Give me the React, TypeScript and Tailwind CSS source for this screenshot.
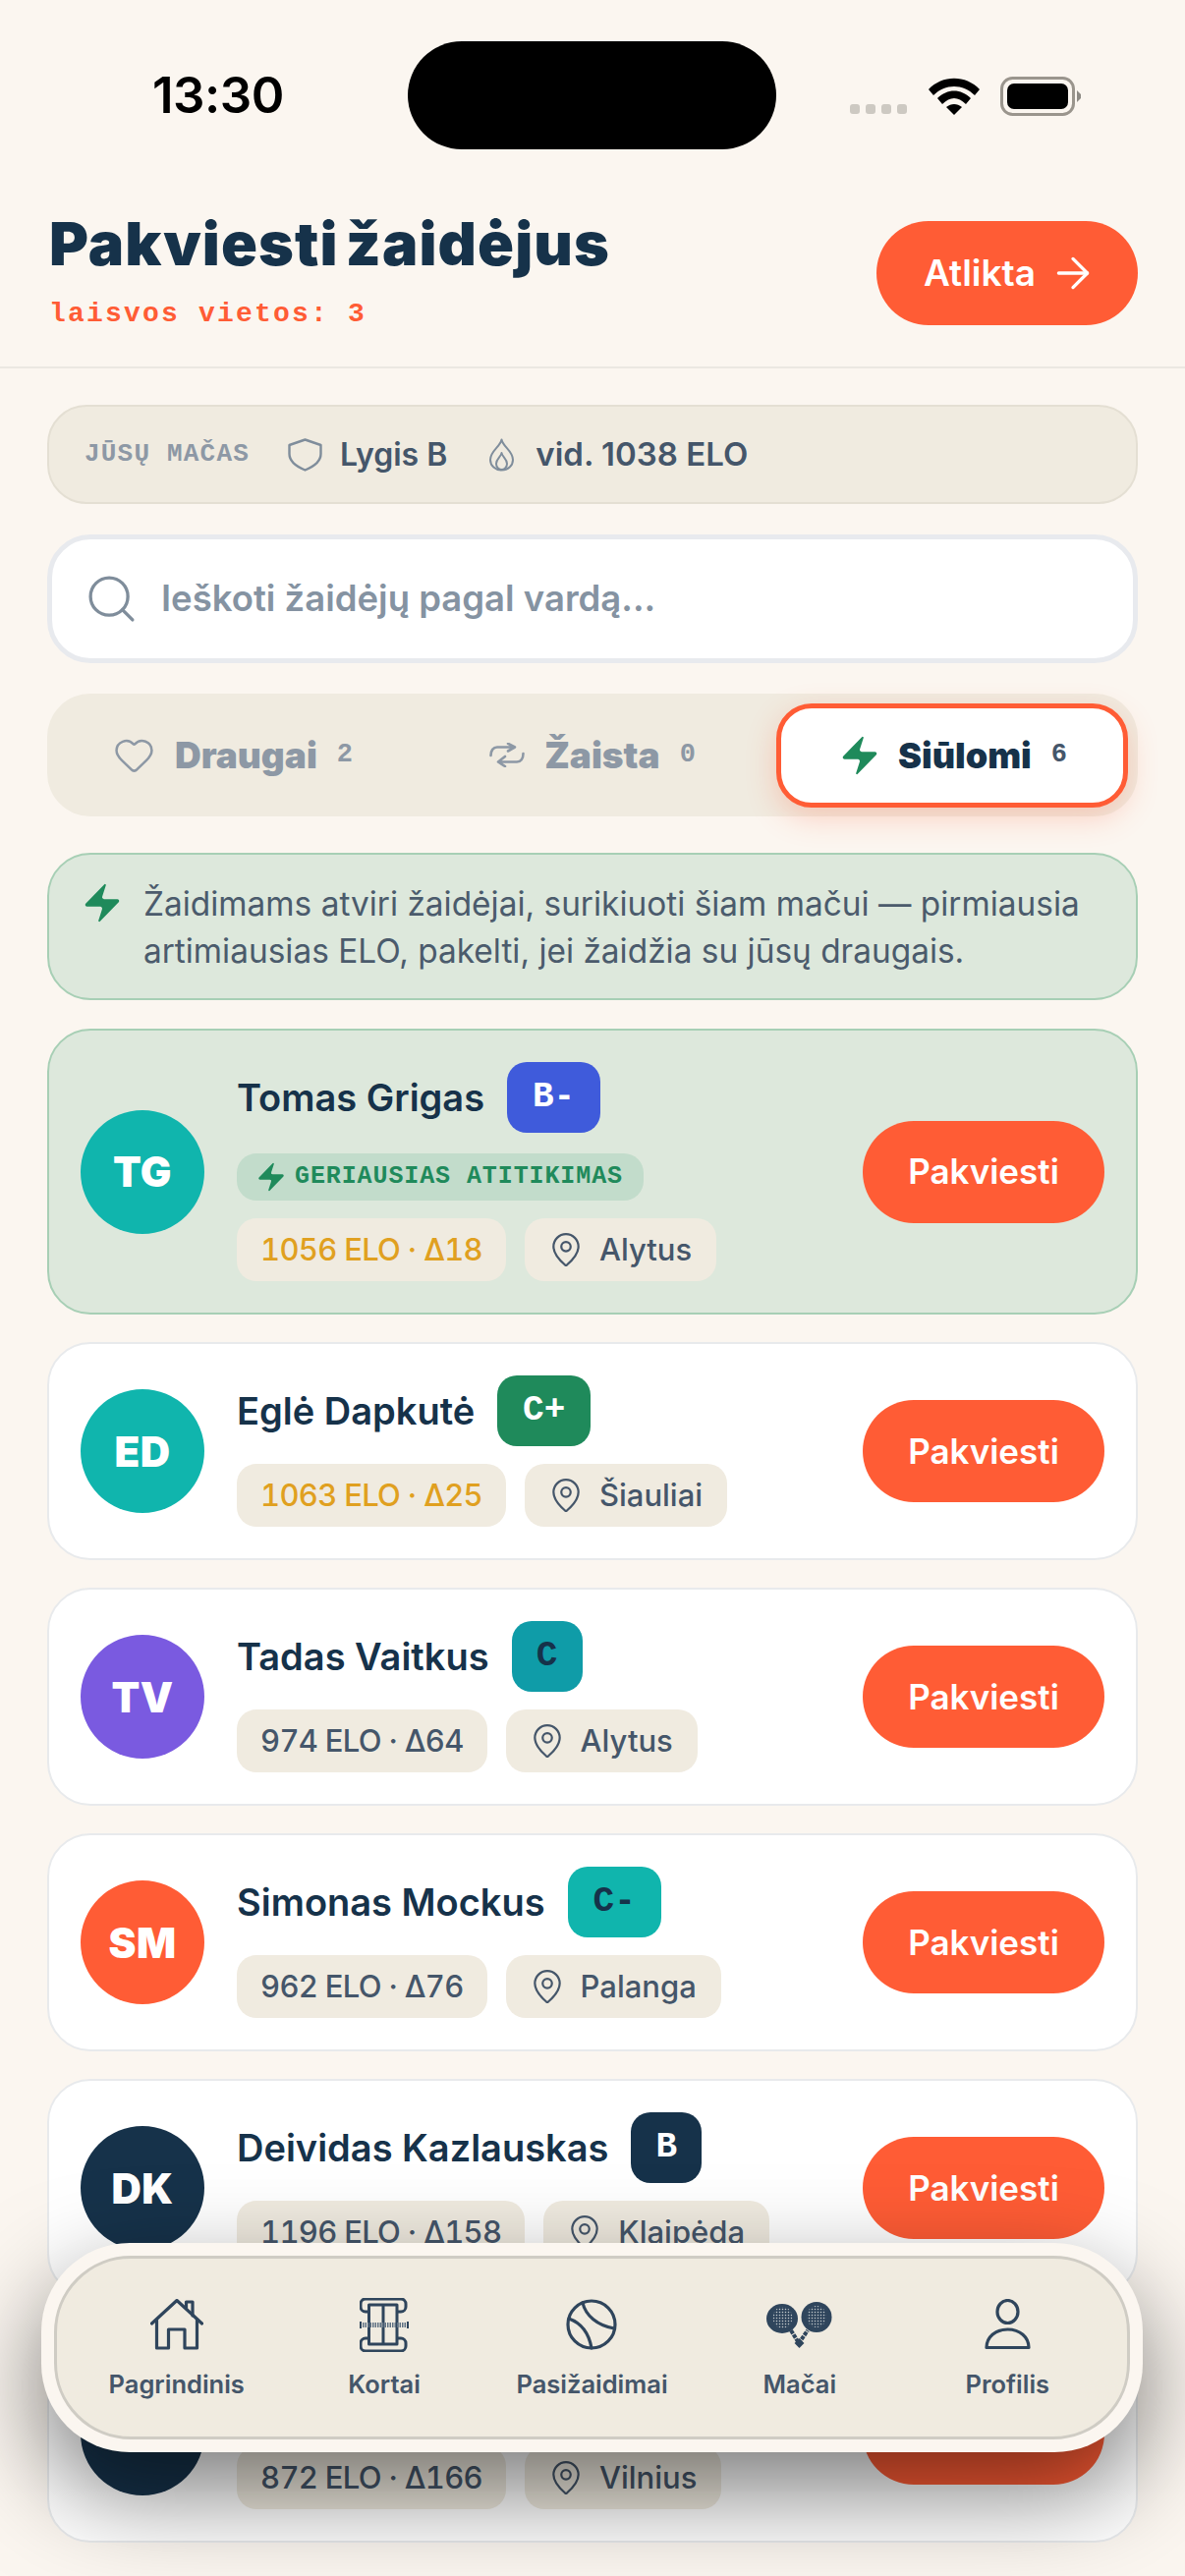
import { ArrowRight, Heart, MapPin, Search, Zap } from "lucide-react";

type Player = {
  initials: string;
  name: string;
  grade: string;
  gradeClass: string;
  avatarClass: string;
  elo: string;
  city: string;
  close?: boolean;
  best?: boolean;
};

// the last card sits behind the nav, its name row can't be read in the design
const players: Player[] = [
  { initials: "TG", name: "Tomas Grigas", grade: "B-", gradeClass: "bg-[#3f5bdb] w-[95px] text-white", avatarClass: "bg-[#10b5ad]", elo: "1056 ELO · Δ18", city: "Alytus", close: true, best: true },
  { initials: "ED", name: "Eglė Dapkutė", grade: "C+", gradeClass: "bg-[#1f8a5b] w-[95px] text-white", avatarClass: "bg-[#10b5ad]", elo: "1063 ELO · Δ25", city: "Šiauliai", close: true },
  { initials: "TV", name: "Tadas Vaitkus", grade: "C", gradeClass: "bg-[#0f9ca8] w-[72px] text-[#16324a]", avatarClass: "bg-[#7a5ae0]", elo: "974 ELO · Δ64", city: "Alytus" },
  { initials: "SM", name: "Simonas Mockus", grade: "C-", gradeClass: "bg-[#10b5ad] w-[95px] text-[#16324a]", avatarClass: "bg-[#ff5c35]", elo: "962 ELO · Δ76", city: "Palanga" },
  { initials: "DK", name: "Deividas Kazlauskas", grade: "B", gradeClass: "bg-[#16324a] w-[72px] text-white", avatarClass: "bg-[#16324a]", elo: "1196 ELO · Δ158", city: "Klaipėda" },
  { initials: "", name: "", grade: "", gradeClass: "w-[72px]", avatarClass: "bg-[#16324a]", elo: "872 ELO · Δ166", city: "Vilnius" },
];

function StatusBar() {
  return (
    <div className="flex h-[152px] items-start pt-[42px]">
      <div className="w-[415px] pl-[155px] pt-[25px] text-[51px] leading-[60px] font-semibold tracking-[-0.5px] text-black">13:30</div>
      <div className="h-[110px] w-[375px] rounded-[55px] bg-black" />
      <div className="flex flex-1 items-center pl-[75px] pt-[36px]">
        <div className="mt-[26px] flex gap-[6px]">
          <span className="size-[10px] rounded-[3px] bg-[#cdc9c2]" />
          <span className="size-[10px] rounded-[3px] bg-[#cdc9c2]" />
          <span className="size-[10px] rounded-[3px] bg-[#cdc9c2]" />
          <span className="size-[10px] rounded-[3px] bg-[#cdc9c2]" />
        </div>
        <svg width="52" height="38" viewBox="0 0 52 38" className="ml-[22px]">
          <path d="M0 12 C14 -3 38 -3 52 12 L47 18 C35 6 17 6 5 18 Z" fill="#000" />
          <path d="M9 21 C19 11 33 11 43 21 L38 27 C30 19 22 19 14 27 Z" fill="#000" />
          <path d="M18 30 C23 26 29 26 34 30 L26 38 Z" fill="#000" />
        </svg>
        <svg width="84" height="40" viewBox="0 0 84 40" className="ml-[21px]">
          <rect x="1.5" y="1.5" width="73" height="37" rx="11" fill="none" stroke="#9a958d" strokeWidth="3" />
          <rect x="7" y="7" width="62" height="26" rx="7" fill="#000" />
          <path d="M78 14 L82 18 V22 L78 26 Z" fill="#8d8a84" />
        </svg>
      </div>
    </div>
  );
}

function Header() {
  return (
    <div className="flex h-[223px] items-start justify-between border-b-2 border-[#ebe8e2] pl-[50px] pr-[48px] pt-[73px]">
      <div>
        <h1 className="-mt-[12px] text-[61px] leading-[70px] font-black tracking-[1.1px] text-[#16324a] [word-spacing:-6px]">Pakviesti žaidėjus</h1>
        <div className="mt-[20px] font-['Liberation_Mono',monospace] text-[28px] leading-[34px] font-bold tracking-[2.2px] text-[#ff5c35]">laisvos vietos: 3</div>
      </div>
      <button className="flex h-[106px] w-[266px] items-center gap-[13px] rounded-full bg-[#ff5c35] pl-[48px] text-[37px] font-semibold text-white">
        Atlikta
        <ArrowRight size={50} strokeWidth={1.6} />
      </button>
    </div>
  );
}

function MatchBar() {
  return (
    <div className="mx-[48px] mt-[37px] flex h-[101px] items-center rounded-[40px] border-2 border-[#e4dfd3] bg-[#f0ebe0] pl-[36px]">
      <span className="font-['Liberation_Mono',monospace] text-[26px] font-bold tracking-[1.2px] text-[#8d98a5]">JŪSŲ MAČAS</span>
      <svg width="35" height="34" viewBox="0 0 35 34" fill="none" stroke="#7f8d9b" strokeWidth="2.4" strokeLinejoin="round" className="ml-[39px]">
        <path d="M17.5 1.5 L33.5 7 V16 C33.5 24 26 29 17.5 32.5 C9 29 1.5 24 1.5 16 V7 Z" />
      </svg>
      <span className="ml-[18px] text-[32px] font-semibold text-[#45566a]">Lygis B</span>
      <svg width="27" height="34" viewBox="0 0 27 34" fill="none" stroke="#7f8d9b" strokeWidth="2" strokeLinejoin="round" className="ml-[42px]">
        <path d="M13.5 1.5 C15 9 25 13 25 22 C25 28 20 32.5 13.5 32.5 C7 32.5 2 28 2 22 C2 13 12 9 13.5 1.5 Z" />
        <path d="M13.5 15 C14 19 19 21 19 26 C19 30 16 32 13.5 32 C11 32 8 30 8 26 C8 21 13 19 13.5 15 Z" />
      </svg>
      <span className="ml-[21px] text-[33px] font-semibold text-[#45566a]">vid. 1038 ELO</span>
    </div>
  );
}

function SearchBox() {
  return (
    <div className="mx-[48px] mt-[31px] flex h-[131px] items-center rounded-[44px] border-[5px] border-[#e8eaee] bg-white pl-[32px]">
      <Search size={57} strokeWidth={1.4} className="text-[#7f8d9b]" />
      <span className="ml-[22px] text-[36.5px] font-semibold text-[#8593a2]">Ieškoti žaidėjų pagal vardą...</span>
    </div>
  );
}

function Tabs() {
  return (
    <div className="mx-[48px] mt-[31px] grid h-[125px] grid-cols-3 items-center gap-[8px] rounded-[44px] bg-[#f0ebe0] px-[10px] text-[37px] font-black text-[#8d98a5]">
      <div className="flex items-center justify-center gap-[20px]">
        <Heart size={43} strokeWidth={1.4} />
        <span>Draugai</span>
        <span className="font-['Liberation_Mono',monospace] text-[27px] font-bold">2</span>
      </div>
      <div className="flex items-center justify-center gap-[20px]">
        <svg width="36" height="25" viewBox="0 0 36 25" fill="none" stroke="#8d98a5" strokeWidth="2.6" strokeLinecap="round" strokeLinejoin="round">
          <path d="M1.5 13 C1.5 8 4 4.5 8 4.5 H26 M19 0.8 L26 4.5 L19 8.5" />
          <path d="M34.5 11 C34.5 16 32 19.5 28 19.5 H9 M16 14 L9 19.5 L16 24" />
        </svg>
        <span>Žaista</span>
        <span className="font-['Liberation_Mono',monospace] text-[27px] font-bold">0</span>
      </div>
      <div className="flex h-[106px] items-center justify-center gap-[16px] rounded-[36px] border-[5px] border-[#ff5c35] bg-white text-[36px] text-[#16324a] shadow-[0_10px_30px_rgba(255,92,53,0.25)]">
        <Zap size={46} fill="#1f8a5b" strokeWidth={0} />
        <span>Siūlomi</span>
        <span className="ml-[4px] font-['Liberation_Mono',monospace] text-[27px] font-bold text-[#45566a]">6</span>
      </div>
    </div>
  );
}

function InfoBox() {
  return (
    <div className="mx-[48px] mt-[37px] flex h-[150px] rounded-[44px] border-2 border-[#a7cfb5] bg-[#dde8dc] pl-[31px] pt-[26px]">
      <Zap size={46} fill="#1f8a5b" strokeWidth={0} className="shrink-0" />
      <p className="ml-[19px] text-[33.4px] leading-[48px] text-[#4b5b6c]">
        Žaidimams atviri žaidėjai, surikiuoti šiam mačui — pirmiausia
        <br />
        artimiausias ELO, pakelti, jei žaidžia su jūsų draugais.
      </p>
    </div>
  );
}

function PlayerCard({ player }: { player: Player }) {
  return (
    <div className={`flex items-center rounded-[44px] border-2 px-[32px] py-[32px] ${player.best ? "border-[#a7cfb5] bg-[#dde8dc]" : "border-[#e8eaec] bg-white"}`}>
      <div className={`flex size-[126px] shrink-0 items-center justify-center rounded-full text-[42px] font-black tracking-[0.5px] text-white ${player.avatarClass}`}>{player.initials}</div>
      <div className="ml-[33px] flex flex-1 flex-col items-start gap-[18px]">
        <div className="flex items-center gap-[23px]">
          <span className="text-[38px] font-semibold text-[#16324a]">{player.name}</span>
          <span className={`flex h-[72px] items-center justify-center rounded-[20px] font-['Liberation_Mono',monospace] text-[36px] font-bold ${player.gradeClass}`}>{player.grade}</span>
        </div>
        {player.best && (
          <div className="mt-[3px] flex h-[48px] w-[414px] items-center gap-[7px] rounded-[20px] bg-[#c2dccb] pl-[18px] font-['Liberation_Mono',monospace] text-[25px] font-bold tracking-[0.9px] text-[#1f8a5b]">
            <Zap size={34} fill="#1f8a5b" strokeWidth={0} />
            GERIAUSIAS ATITIKIMAS
          </div>
        )}
        <div className="flex gap-[19px]">
          <span className={`flex h-[64px] items-center rounded-[20px] bg-[#f0ebe0] px-[24px] text-[31px] font-medium tracking-[-0.7px] tabular-nums ${player.close ? "text-[#e0a020]" : "text-[#45566a]"}`}>{player.elo}</span>
          <span className="flex h-[64px] items-center gap-[15px] rounded-[20px] bg-[#f0ebe0] pl-[23px] pr-[25px] text-[31px] font-medium text-[#45566a]">
            <MapPin size={38} strokeWidth={1.4} />
            {player.city}
          </span>
        </div>
      </div>
      <button className="flex h-[104px] w-[246px] shrink-0 items-center justify-center rounded-full bg-[#ff5c35] text-[35px] font-semibold text-white">Pakviesti</button>
    </div>
  );
}

function HomeIcon() {
  return (
    <svg width="54" height="52" viewBox="0 0 54 52" fill="none" stroke="#2f455c" strokeWidth="3.2" strokeLinejoin="round" strokeLinecap="round">
      <path d="M1.5 25 L27 1.5 L52.5 25" />
      <path d="M36.5 9 V3 H43 V17" />
      <path d="M6.5 21 V50 H18.5 V31 H35 V50 H47.5 V21" />
    </svg>
  );
}

function CourtIcon() {
  return (
    <svg width="50" height="55" viewBox="0 0 50 55" fill="none" stroke="#2f455c" strokeWidth="3" strokeLinejoin="round">
      <path d="M9.5 14 H6 a5 5 0 0 1 -5 -5 V6 a5 5 0 0 1 5 -5 H42 a5 5 0 0 1 5 5 V9 a5 5 0 0 1 -5 5 H38" />
      <path d="M9.5 41 H6 a5 5 0 0 0 -5 5 V49 a5 5 0 0 0 5 5 H42 a5 5 0 0 0 5 -5 V46 a5 5 0 0 0 -5 -5 H38" />
      <rect x="9.5" y="7" width="28.5" height="40" />
      <path d="M24 7 V47" />
      <path d="M3 27.5 H47" strokeWidth="5" strokeDasharray="1.5 1" stroke="#5f7183" />
      <path d="M1 24 V31 M49 24 V31" strokeWidth="2" />
    </svg>
  );
}

function BallIcon() {
  return (
    <svg width="52" height="52" viewBox="0 0 52 52" fill="none" stroke="#2f455c" strokeWidth="3.2" strokeLinecap="round">
      <circle cx="26" cy="26" r="24" />
      <path d="M17 4 C20 17 32 27 49 30" />
      <path d="M3 20 C14 24 23 33 26 50" />
    </svg>
  );
}

function RacketsIcon() {
  return (
    <svg width="67" height="47" viewBox="0 0 67 47">
      <defs>
        <pattern id="strings" width="3" height="3" patternUnits="userSpaceOnUse">
          <circle cx="1.5" cy="1.5" r="0.75" fill="#c3c9cb" />
        </pattern>
      </defs>
      <g fill="#2f455c">
        <ellipse cx="16" cy="17" rx="16" ry="15" />
        <ellipse cx="51" cy="15.5" rx="15.5" ry="15.5" />
      </g>
      <ellipse cx="16.5" cy="16" rx="10" ry="11" fill="url(#strings)" />
      <ellipse cx="51" cy="15" rx="10" ry="11" fill="url(#strings)" />
      <path d="M25 29 L33 42 L42 29" fill="none" stroke="#2f455c" strokeWidth="4" strokeDasharray="4 1" />
      <rect x="30" y="38.5" width="7" height="7" transform="rotate(45 33.5 42)" fill="#2f455c" />
    </svg>
  );
}

function PersonIcon() {
  return (
    <svg width="47" height="52" viewBox="0 0 47 52" fill="none" stroke="#2f455c" strokeWidth="3.2" strokeLinejoin="round">
      <ellipse cx="23.5" cy="13" rx="10.5" ry="11.5" />
      <path d="M2 49.5 C2 39 11 31 23.5 31 C36 31 45 39 45 49.5 Z" />
    </svg>
  );
}

const navItems = [
  { label: "Pagrindinis", icon: <HomeIcon /> },
  { label: "Kortai", icon: <CourtIcon /> },
  { label: "Pasižaidimai", icon: <BallIcon /> },
  { label: "Mačai", icon: <RacketsIcon /> },
  { label: "Profilis", icon: <PersonIcon /> },
];

function BottomNav() {
  return (
    <div className="absolute bottom-[126px] left-[42px] h-[213px] w-[1121px] rounded-[90px] bg-[#fbf6f0] p-[13px] shadow-[0_40px_100px_rgba(0,0,0,0.52)]">
      <div className="grid h-full grid-cols-5 rounded-[78px] border-[3px] border-[#cfccc4] bg-[#f0ebe0] px-[16px] pt-[39px]">
        {navItems.map((item) => (
          <div key={item.label} className="flex flex-col items-center">
            <div className="flex h-[56px] items-center">{item.icon}</div>
            <span className="mt-[14px] text-[25.5px] font-semibold text-[#45566a]">{item.label}</span>
          </div>
        ))}
      </div>
    </div>
  );
}

export default function App() {
  return (
    <div className="relative h-[2622px] w-[1206px] overflow-hidden bg-[#fbf6f0] font-[Inter,sans-serif]">
      <StatusBar />
      <Header />
      <MatchBar />
      <SearchBox />
      <Tabs />
      <InfoBox />
      <div className="mx-[48px] mt-[29px] flex flex-col gap-[28px]">
        {players.map((player, i) => (
          <PlayerCard key={i} player={player} />
        ))}
      </div>
      <BottomNav />
    </div>
  );
}
